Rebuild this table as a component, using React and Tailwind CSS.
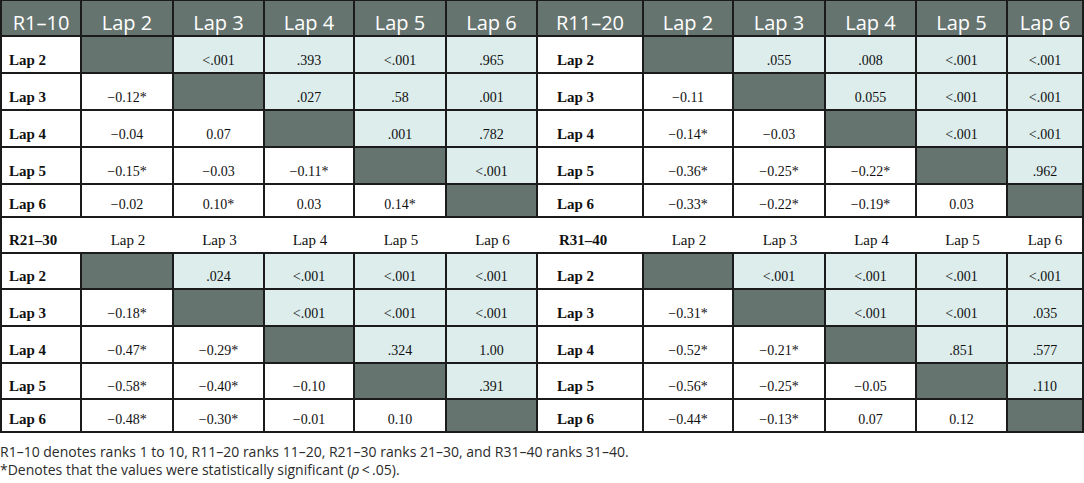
import React from "react";

const G = "g"; // diagonal (gray) cell

const blocks = [
  {
    name: "R1–10",
    rows: [
      ["Lap 2", [G, "<.001", ".393", "<.001", ".965"]],
      ["Lap 3", ["−0.12*", G, ".027", ".58", ".001"]],
      ["Lap 4", ["−0.04", "0.07", G, ".001", ".782"]],
      ["Lap 5", ["−0.15*", "−0.03", "−0.11*", G, "<.001"]],
      ["Lap 6", ["−0.02", "0.10*", "0.03", "0.14*", G]],
    ],
  },
  {
    name: "R11–20",
    rows: [
      ["Lap 2", [G, ".055", ".008", "<.001", "<.001"]],
      ["Lap 3", ["−0.11", G, "0.055", "<.001", "<.001"]],
      ["Lap 4", ["−0.14*", "−0.03", G, "<.001", "<.001"]],
      ["Lap 5", ["−0.36*", "−0.25*", "−0.22*", G, ".962"]],
      ["Lap 6", ["−0.33*", "−0.22*", "−0.19*", "0.03", G]],
    ],
  },
  {
    name: "R21–30",
    rows: [
      ["Lap 2", [G, ".024", "<.001", "<.001", "<.001"]],
      ["Lap 3", ["−0.18*", G, "<.001", "<.001", "<.001"]],
      ["Lap 4", ["−0.47*", "−0.29*", G, ".324", "1.00"]],
      ["Lap 5", ["−0.58*", "−0.40*", "−0.10", G, ".391"]],
      ["Lap 6", ["−0.48*", "−0.30*", "−0.01", "0.10", G]],
    ],
  },
  {
    name: "R31–40",
    rows: [
      ["Lap 2", [G, "<.001", "<.001", "<.001", "<.001"]],
      ["Lap 3", ["−0.31*", G, "<.001", "<.001", ".035"]],
      ["Lap 4", ["−0.52*", "−0.21*", G, ".851", ".577"]],
      ["Lap 5", ["−0.56*", "−0.25*", "−0.05", G, ".110"]],
      ["Lap 6", ["−0.44*", "−0.13*", "0.07", "0.12", G]],
    ],
  },
];

const widths = [
  "w-[82px] border-l-2",
  "w-[92px]",
  "w-[91px]",
  "w-[90px]",
  "w-[92px]",
  "w-[91px]",
  "w-[106px]",
  "w-[90px]",
  "w-[92px]",
  "w-[91px]",
  "w-[91px]",
  "w-[76px]",
];

const laps = ["Lap 2", "Lap 3", "Lap 4", "Lap 5", "Lap 6"];
const rowH = [
  ["h-[37px]", "h-[37px]", "h-[37px]", "h-[37px]", "h-[33px]"],
  ["h-[36px]", "h-[37px]", "h-[37px]", "h-[36px]", "h-[33px]"],
];

const line = "border-[#1b1b1b]";
const serif = "font-['Liberation_Serif',serif] text-[#111]";

function Label({ w, second, children }) {
  return (
    <div
      className={`${w} ${line} shrink-0 border-r-2 flex items-end pb-[4px] ${
        second ? "pl-[19px]" : "pl-[7px]"
      } ${serif} text-[15px] font-bold leading-none`}
    >
      {children}
    </div>
  );
}

function Value({ w, v, upper }) {
  if (v === G) {
    return <div className={`${w} ${line} shrink-0 border-r-2 bg-[#66746f]`} />;
  }
  return (
    <div
      className={`${w} ${line} shrink-0 border-r-2 flex items-end justify-center pb-[4px] ${serif} text-[14px] leading-none ${
        upper ? "bg-[#dcedec]" : "bg-white"
      }`}
    >
      {v}
    </div>
  );
}

function DarkHeader({ left, right }) {
  const cells = [left, ...laps, right, ...laps];
  return (
    <div className={`flex h-[37px] border-t ${line} border-b-2 bg-[#66746f]`}>
      {cells.map((c, i) => (
        <div
          key={i}
          className={`${widths[i]} ${line} shrink-0 border-r-2 flex items-end justify-center pb-[2px] font-['Open_Sans',sans-serif] text-[20px] leading-none text-white`}
        >
          {c}
        </div>
      ))}
    </div>
  );
}

function PlainHeader({ left, right }) {
  const cells = [left, ...laps, right, ...laps];
  return (
    <div className={`flex h-[36px] border-l-2 border-r-2 border-b-2 ${line} bg-white`}>
      {cells.map((c, i) => {
        const isLabel = i === 0 || i === 6;
        const w = i === 0 ? "w-[80px]" : i === 11 ? "w-[74px]" : widths[i];
        return (
          <div
            key={i}
            className={`${w} shrink-0 flex items-end pb-[4px] ${serif} leading-none ${
              isLabel
                ? `font-bold text-[15px] ${i === 0 ? "pl-[7px]" : "pl-[21px]"}`
                : "justify-center text-[15px]"
            }`}
          >
            {c}
          </div>
        );
      })}
    </div>
  );
}

function Body({ a, b, hs }) {
  return a.rows.map((r, ri) => (
    <div key={ri} className={`flex ${hs[ri]} border-b-2 ${line}`}>
      <Label w={widths[0]}>{r[0]}</Label>
      {r[1].map((v, ci) => (
        <Value key={ci} w={widths[ci + 1]} v={v} upper={ci > ri} />
      ))}
      <Label w={widths[6]} second>
        {b.rows[ri][0]}
      </Label>
      {b.rows[ri][1].map((v, ci) => (
        <Value key={ci} w={widths[ci + 7]} v={v} upper={ci > ri} />
      ))}
    </div>
  ));
}

export default function App() {
  return (
    <div className="w-[1084px] h-[483px] bg-white overflow-hidden">
      <DarkHeader left={blocks[0].name} right={blocks[1].name} />
      <Body a={blocks[0]} b={blocks[1]} hs={rowH[0]} />
      <PlainHeader left={blocks[2].name} right={blocks[3].name} />
      <Body a={blocks[2]} b={blocks[3]} hs={rowH[1]} />

      <div className="pt-[10px] font-['Open_Sans',sans-serif] text-[14px] leading-[17.5px] text-[#2b2b2b]">
        <p>
          R1–10 denotes ranks 1 to 10, R11–20 ranks 11–20, R21–30 ranks 21–30, and R31–40 ranks
          31–40.
        </p>
        <p>
          *Denotes that the values were statistically significant (<i>p</i>&thinsp;&lt;&thinsp;.05).
        </p>
      </div>
    </div>
  );
}
